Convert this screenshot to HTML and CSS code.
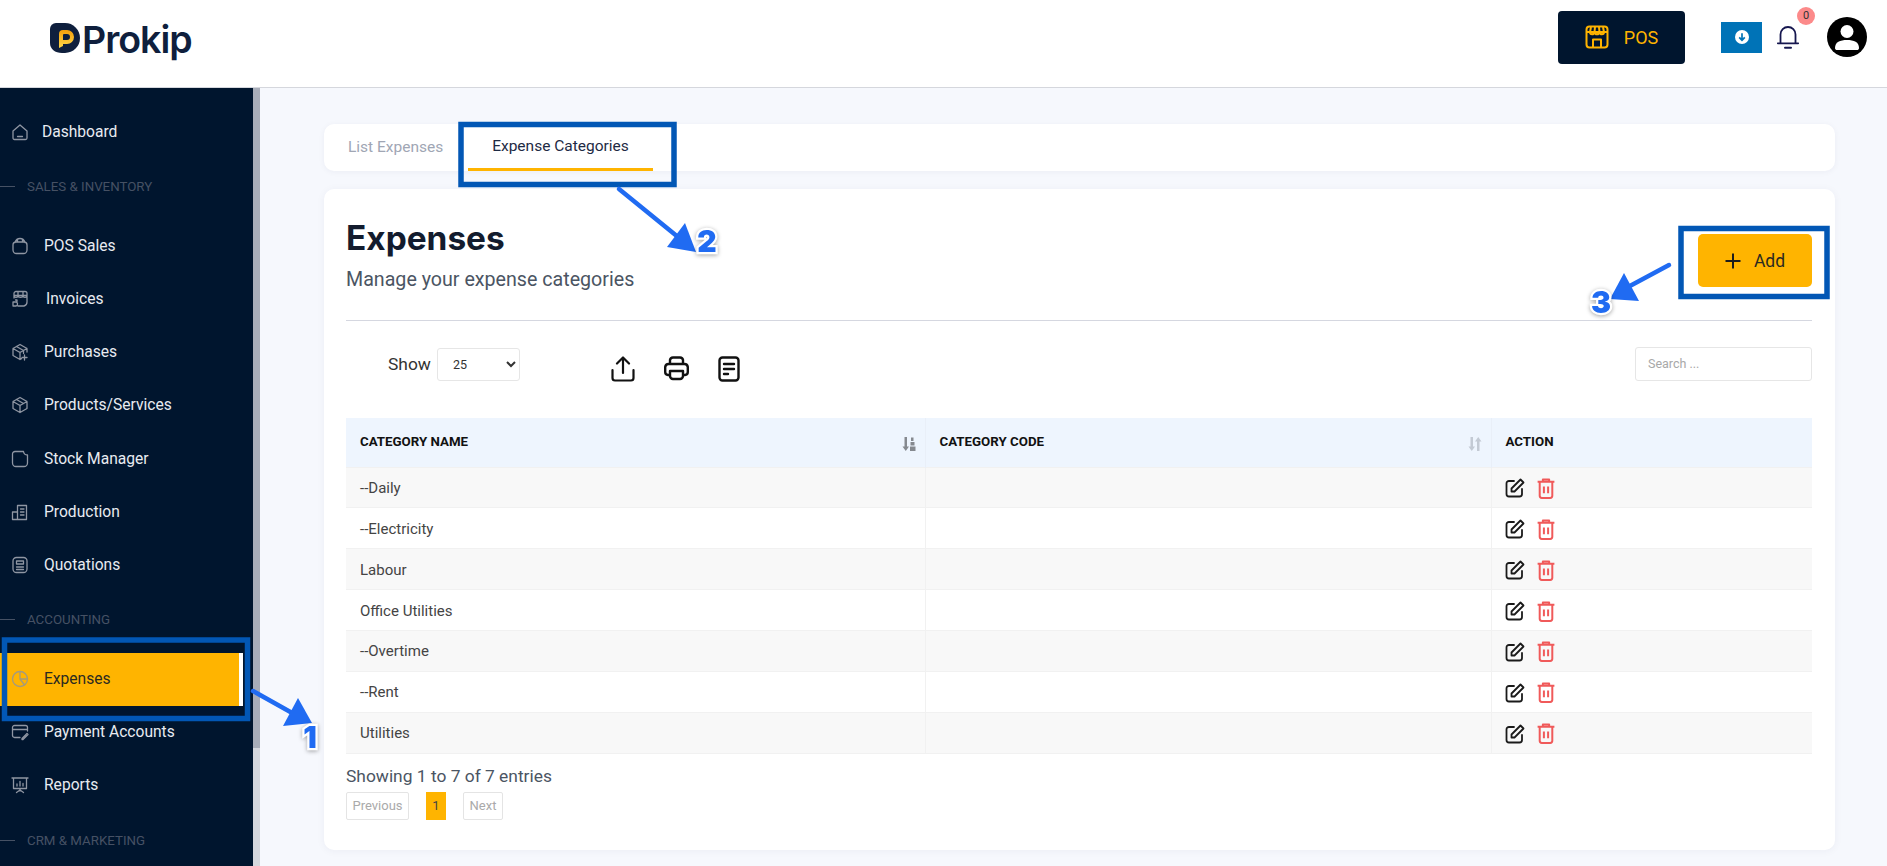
FILE: index.html
```html
<!DOCTYPE html>
<html lang="en">
<head>
<meta charset="utf-8">
<title>Prokip - Expense Categories</title>
<link rel="stylesheet" href="styles.css">
</head>
<body>
<div class="page">
  <header class="topbar">
    <a class="logo">
      <svg class="logo-mark" viewBox="0 0 30 31" width="30" height="31">
        <defs><linearGradient id="pg" x1="0" y1="0" x2="0" y2="1"><stop offset="0" stop-color="#f59f0a"/><stop offset="1" stop-color="#ffd84a"/></linearGradient></defs>
        <path d="M6 0H15A15 15 0 0 1 30 15A15 15 0 0 1 15 30H12C5 30 0 26 0 20V6A6 6 0 0 1 6 0Z" fill="#0f1f3d"/>
        <path d="M9 25V11A4 4 0 0 1 13 7H17A7 7 0 0 1 17 21H13V17H17A3 3 0 0 0 17 11H14A1 1 0 0 0 13 12V23Z" fill="url(#pg)"/>
      </svg>
      <span class="logo-text">Prokip</span>
    </a>
    <div class="top-actions">
      <button class="pos-btn">
        <svg viewBox="0 0 24 24" width="24" height="24" fill="none" stroke="#ffb400" stroke-width="2" stroke-linejoin="round"><rect x="1.500" y="1.500" width="21" height="21" rx="3"/><path d="M2 7H22M6 2L5 7C5 10 9 10 9.500 7L10 2M9.500 7C10 10 14 10 14.500 7L14 2M14.500 7C15 10 19 10 19 7L18 2M8 22V14.500H16V22"/></svg>
        <span>POS</span>
      </button>
      <button class="dl-btn">
        <svg viewBox="0 0 14 14" width="14" height="14"><circle cx="7" cy="7" r="7" fill="#fff"/><path d="M7 3.200V10M4.200 7.400L7 10.200L9.800 7.400" fill="none" stroke="#0073b7" stroke-width="1.700"/></svg>
      </button>
      <div class="bell">
        <svg viewBox="0 0 22 24" width="22" height="24" fill="none" stroke="#16174f" stroke-width="1.800" stroke-linecap="round"><path d="M3.500 18V9.500A7.500 7.500 0 0 1 18.500 9.500V18M0.800 18.300H21.200"/><path d="M8 22.800H14" stroke-width="2"/></svg>
        <span class="badge">0</span>
      </div>
      <svg class="avatar" viewBox="0 0 40 40" width="40" height="40"><circle cx="20" cy="20" r="20" fill="#000"/><circle cx="20" cy="14.500" r="6.500" fill="#fff"/><path d="M8 31C8 25 13 23 20 23S32 25 32 31C32 32.500 31 33 30 33H10C9 33 8 32.500 8 31Z" fill="#fff"/></svg>
    </div>
  </header>

  <div class="body-row">
    <aside class="sidebar">
      <nav class="nav">
        <a class="nav-item nav-tight"><svg class="ico" viewBox="0 0 18 18"><path d="M2 15V8L9 2L16 8V15A1.500 1.500 0 0 1 14.500 16.500H3.500A1.500 1.500 0 0 1 2 15ZM6.500 13.500H11.500"/></svg><span>Dashboard</span></a>
        <div class="nav-section"><i></i><span>SALES &amp; INVENTORY</span></div>
        <a class="nav-item"><svg class="ico" viewBox="0 0 18 18"><path d="M2 8A3 3 0 0 1 5 5H13A3 3 0 0 1 16 8V13A3.500 3.500 0 0 1 12.500 16.500H5.500A3.500 3.500 0 0 1 2 13ZM4 5.500C5 2.500 7 1.500 9 1.500S13 2.500 14 5.500M6.500 5V2.500M11.500 5V2.500"/></svg><span>POS Sales</span></a>
        <a class="nav-item nav-wide"><svg class="ico" viewBox="0 0 18 18"><path d="M3 8V3.500A2 2 0 0 1 5 1.500H14A2 2 0 0 1 16 3.500V12C16 14 15 15.500 13 16H7M3 5.500H16M3 5.500C3 8 7 8 7 5.500C7 8 12 8 12 5.500C12 8 16 8 16 5.500M7 1.500V5.500M12 1.500V5.500M4.500 10H6V11.500M2 12H5C7 12 7 16 5 16H2Z"/></svg><span>Invoices</span></a>
        <a class="nav-item"><svg class="ico" viewBox="0 0 18 18"><path d="M16 9V5.500L9 1.500L2 5.500V12.500L9 16.500L10.500 15.600M2 5.500L9 9.500L16 5.500M9 9.500V16.500M5.500 3.500L12.500 7.500V10.500M13.500 12V17M11 14.500H16"/></svg><span>Purchases</span></a>
        <a class="nav-item"><svg class="ico" viewBox="0 0 18 18"><path d="M16 5.500V12.500L9 16.500L2 12.500V5.500L9 1.500ZM2 5.500L9 9.500L16 5.500M9 9.500V16.500M5.500 3.500L12.500 7.500"/></svg><span>Products/Services</span></a>
        <a class="nav-item"><svg class="ico" viewBox="0 0 18 18"><path d="M4 1.500H12.500A4 4 0 0 0 16.500 5V13A3.500 3.500 0 0 1 13 16.500H5A3.500 3.500 0 0 1 1.500 13V4A2.500 2.500 0 0 1 4 1.500Z"/></svg><span>Stock Manager</span></a>
        <a class="nav-item"><svg class="ico" viewBox="0 0 18 18"><path d="M1.500 16.500V9H6.500V16.500ZM6.500 16.500V2.500H15.500V16.500H1.500M9.500 6H13M9.500 9H13M9.500 12H13"/></svg><span>Production</span></a>
        <a class="nav-item"><svg class="ico" viewBox="0 0 18 18"><rect x="2" y="1.500" width="14" height="15" rx="3.500"/><path d="M5.500 5H12.500V8H5.500ZM5.500 11H12.500M5.500 13.500H12.500"/></svg><span>Quotations</span></a>
        <div class="nav-section"><i></i><span>ACCOUNTING</span></div>
        <a class="nav-item is-active"><svg class="ico" viewBox="0 0 18 18"><circle cx="9" cy="9" r="7.500"/><path d="M9 1.500V9H16.500M9 9L13.500 15"/></svg><span>Expenses</span></a>
        <a class="nav-item"><svg class="ico" viewBox="0 0 18 18"><path d="M9 14.500H3.500A2 2 0 0 1 1.500 12.500V4.500A2 2 0 0 1 3.500 2.500H14.500A2 2 0 0 1 16.500 4.500V8M1.500 6.500H16.500M11 15.500L16 10.500L17 11.500L12 16.500H11Z"/></svg><span>Payment Accounts</span></a>
        <a class="nav-item"><svg class="ico" viewBox="0 0 18 18"><path d="M1 2H17M2.500 2V12.500H15.500V2M9 12.500V15M5.500 16.500L9 14L12.500 16.500M6 10V8M9 10V5.500M12 10V7.500"/></svg><span>Reports</span></a>
        <div class="nav-section"><i></i><span>CRM &amp; MARKETING</span></div>
      </nav>
    </aside>
    <div class="rail"><div class="rail-thumb"></div></div>

    <main class="main">
      <div class="tabs">
        <a class="tab tab-list">List Expenses</a>
        <a class="tab tab-active">Expense Categories</a>
      </div>

      <section class="panel">
        <div class="panel-head">
          <div class="panel-title">
            <h1>Expenses</h1>
            <p>Manage your expense categories</p>
          </div>
          <button class="add-btn">
            <svg viewBox="0 0 16 16" width="16" height="16" fill="none" stroke="#1c1c1c" stroke-width="2"><path d="M8 0.500V15.500M0.500 8H15.500"/></svg>
            <span>Add</span>
          </button>
        </div>

        <div class="toolbar">
          <label class="show">Show
            <select class="show-select"><option>25</option></select>
          </label>
          <div class="tools">
            <svg viewBox="0 0 24 26" width="24" height="26" fill="none" stroke="#111" stroke-width="2.200" stroke-linecap="round" stroke-linejoin="round"><path d="M12 17V2M6 7.500L12 1.500L18 7.500M1.500 14V22A2.500 2.500 0 0 0 4 24.500H20A2.500 2.500 0 0 0 22.500 22V14"/></svg>
            <svg viewBox="0 0 25 25" width="25" height="25" fill="none" stroke="#111" stroke-width="2.400" stroke-linejoin="round"><path d="M6 8V4A3 3 0 0 1 9 1.500H16A3 3 0 0 1 19 4V8M6 19H4A3 3 0 0 1 1.200 16V11A3.500 3.500 0 0 1 4.500 8H20.500A3.500 3.500 0 0 1 23.800 11V16A3 3 0 0 1 21 19H19"/><path d="M6 15H19V20A3 3 0 0 1 16 23H9A3 3 0 0 1 6 20Z"/></svg>
            <svg viewBox="0 0 22 26" width="22" height="26" fill="none" stroke="#111" stroke-width="2.400" stroke-linecap="round"><rect x="1.500" y="1.500" width="19" height="23" rx="3"/><path d="M6 8H16M6 13H16M6 18H10"/></svg>
          </div>
          <input class="search" type="text" placeholder="Search ...">
        </div>

        <table class="grid">
          <colgroup><col class="col-a"><col class="col-b"><col class="col-c"></colgroup>
          <thead>
            <tr>
              <th><div class="th-in"><span>CATEGORY NAME</span>
                <svg viewBox="0 0 14 14" width="14" height="14" fill="#85898f"><path d="M2.500 0H5V9.500H7L3.750 14L0.500 9.500H2.500Z"/><path d="M9 0.500H11.500V4H9ZM8.500 5H12.500V8.500H8.500ZM8 9.500H13.500V14H8Z"/></svg></div></th>
              <th><div class="th-in"><span>CATEGORY CODE</span>
                <svg viewBox="0 0 14 14" width="14" height="14" fill="#c3cad4"><path d="M2.500 0H5V9.500H7L3.750 14L0.500 9.500H2.500Z"/><path d="M9 14H11.500V4.500H13.500L10.250 0L7 4.500H9Z"/></svg></div></th>
              <th><div class="th-in"><span>ACTION</span></div></th>
            </tr>
          </thead>
          <tbody>
            <tr><td>--Daily</td><td></td><td><div class="acts"><svg class="act-edit" viewBox="0 0 20 20"><path d="M9 3H4A2.500 2.500 0 0 0 1.500 5.500V16A2.500 2.500 0 0 0 4 18.500H14.500A2.500 2.500 0 0 0 17 16V11M6.500 13.500V10.500L15.500 1.500L18.500 4.500L9.500 13.500Z"/></svg><svg class="act-del" viewBox="0 0 18 20"><path d="M1 3.500H17M6 3.500V1.500H12V3.500M3 3.500V17A2 2 0 0 0 5 19H13A2 2 0 0 0 15 17V3.500M7 8V14.500M11 8V14.500"/></svg></div></td></tr>
            <tr><td>--Electricity</td><td></td><td><div class="acts"><svg class="act-edit" viewBox="0 0 20 20"><path d="M9 3H4A2.500 2.500 0 0 0 1.500 5.500V16A2.500 2.500 0 0 0 4 18.500H14.500A2.500 2.500 0 0 0 17 16V11M6.500 13.500V10.500L15.500 1.500L18.500 4.500L9.500 13.500Z"/></svg><svg class="act-del" viewBox="0 0 18 20"><path d="M1 3.500H17M6 3.500V1.500H12V3.500M3 3.500V17A2 2 0 0 0 5 19H13A2 2 0 0 0 15 17V3.500M7 8V14.500M11 8V14.500"/></svg></div></td></tr>
            <tr><td>Labour</td><td></td><td><div class="acts"><svg class="act-edit" viewBox="0 0 20 20"><path d="M9 3H4A2.500 2.500 0 0 0 1.500 5.500V16A2.500 2.500 0 0 0 4 18.500H14.500A2.500 2.500 0 0 0 17 16V11M6.500 13.500V10.500L15.500 1.500L18.500 4.500L9.500 13.500Z"/></svg><svg class="act-del" viewBox="0 0 18 20"><path d="M1 3.500H17M6 3.500V1.500H12V3.500M3 3.500V17A2 2 0 0 0 5 19H13A2 2 0 0 0 15 17V3.500M7 8V14.500M11 8V14.500"/></svg></div></td></tr>
            <tr><td>Office Utilities</td><td></td><td><div class="acts"><svg class="act-edit" viewBox="0 0 20 20"><path d="M9 3H4A2.500 2.500 0 0 0 1.500 5.500V16A2.500 2.500 0 0 0 4 18.500H14.500A2.500 2.500 0 0 0 17 16V11M6.500 13.500V10.500L15.500 1.500L18.500 4.500L9.500 13.500Z"/></svg><svg class="act-del" viewBox="0 0 18 20"><path d="M1 3.500H17M6 3.500V1.500H12V3.500M3 3.500V17A2 2 0 0 0 5 19H13A2 2 0 0 0 15 17V3.500M7 8V14.500M11 8V14.500"/></svg></div></td></tr>
            <tr><td>--Overtime</td><td></td><td><div class="acts"><svg class="act-edit" viewBox="0 0 20 20"><path d="M9 3H4A2.500 2.500 0 0 0 1.500 5.500V16A2.500 2.500 0 0 0 4 18.500H14.500A2.500 2.500 0 0 0 17 16V11M6.500 13.500V10.500L15.500 1.500L18.500 4.500L9.500 13.500Z"/></svg><svg class="act-del" viewBox="0 0 18 20"><path d="M1 3.500H17M6 3.500V1.500H12V3.500M3 3.500V17A2 2 0 0 0 5 19H13A2 2 0 0 0 15 17V3.500M7 8V14.500M11 8V14.500"/></svg></div></td></tr>
            <tr><td>--Rent</td><td></td><td><div class="acts"><svg class="act-edit" viewBox="0 0 20 20"><path d="M9 3H4A2.500 2.500 0 0 0 1.500 5.500V16A2.500 2.500 0 0 0 4 18.500H14.500A2.500 2.500 0 0 0 17 16V11M6.500 13.500V10.500L15.500 1.500L18.500 4.500L9.500 13.500Z"/></svg><svg class="act-del" viewBox="0 0 18 20"><path d="M1 3.500H17M6 3.500V1.500H12V3.500M3 3.500V17A2 2 0 0 0 5 19H13A2 2 0 0 0 15 17V3.500M7 8V14.500M11 8V14.500"/></svg></div></td></tr>
            <tr><td>Utilities</td><td></td><td><div class="acts"><svg class="act-edit" viewBox="0 0 20 20"><path d="M9 3H4A2.500 2.500 0 0 0 1.500 5.500V16A2.500 2.500 0 0 0 4 18.500H14.500A2.500 2.500 0 0 0 17 16V11M6.500 13.500V10.500L15.500 1.500L18.500 4.500L9.500 13.500Z"/></svg><svg class="act-del" viewBox="0 0 18 20"><path d="M1 3.500H17M6 3.500V1.500H12V3.500M3 3.500V17A2 2 0 0 0 5 19H13A2 2 0 0 0 15 17V3.500M7 8V14.500M11 8V14.500"/></svg></div></td></tr>
          </tbody>
        </table>

        <p class="info">Showing 1 to 7 of 7 entries</p>
        <div class="pager">
          <a class="pg pg-prev">Previous</a>
          <a class="pg pg-cur">1</a>
          <a class="pg pg-next">Next</a>
        </div>
      </section>
    </main>
  </div>

  <svg class="notes" viewBox="0 0 1887 866" width="1887" height="866">
    <g fill="none" stroke="#0257b5" stroke-width="5.500">
      <rect x="4.500" y="640" width="243" height="78.500"/>
      <rect x="461" y="124.500" width="213" height="60"/>
      <rect x="1681" y="228.500" width="146" height="68"/>
    </g>
    <g fill="none" stroke="#206bf2" stroke-width="4.500" stroke-linecap="round">
      <path d="M253 691L294 714"/>
      <path d="M619 189L678 237"/>
      <path d="M1669 265L1628 287"/>
    </g>
    <g fill="#206bf2">
      <path d="M298 698L312 723L283 726Z"/>
      <path d="M685 223L696 252L667 247Z"/>
      <path d="M1624 273L1610 299L1639 301Z"/>
    </g>
    <g class="note-num">
      <text x="310" y="748">1</text>
      <text x="707" y="252">2</text>
      <text x="1601" y="313">3</text>
    </g>
  </svg>
</div>
</body>
</html>
```
FILE: styles.css
```css
* { box-sizing: border-box; }
html, body { margin: 0; height: 100%; overflow: hidden; }
body { font-family: Roboto, "Liberation Sans", sans-serif; color: #1f2937; background: #f6f8fd; }
.page { position: relative; width: 1887px; height: 866px; display: flex; flex-direction: column; overflow: hidden; }

.topbar { height: 88px; flex: none; background: #fff; border-bottom: 1px solid #d5d7dd; display: flex; align-items: center; padding: 0 20px 13px 50px; }
.logo { display: flex; align-items: center; gap: 2px; margin-top: 6px; }
.logo-mark { flex: none; margin-top: -4px; }
.logo-text { font-family: Inter, sans-serif; font-weight: 600; font-size: 37.500px; letter-spacing: -1.000px; line-height: 40px; color: #0f1f3d; }
.top-actions { margin-left: auto; display: flex; align-items: center; }
.pos-btn { width: 127px; height: 53px; background: #00152e; border: 0; border-radius: 4px; display: flex; align-items: center; justify-content: center; gap: 15px; color: #ffb400; font: 400 18px Roboto, sans-serif; padding: 0; }
.dl-btn { width: 41px; height: 31px; margin-left: 36px; background: #0073b7; border: 0; padding: 0; display: flex; align-items: center; justify-content: center; }
.bell { position: relative; width: 22px; height: 24px; margin-left: 15px; }
.bell svg { display: block; }
.badge { position: absolute; left: 20px; top: -18px; width: 18px; height: 18px; border-radius: 50%; background: #fc8a8a; color: #333; font-size: 11px; line-height: 18px; text-align: center; }
.avatar { margin-left: 28px; display: block; }

.body-row { flex: 1; display: flex; min-height: 0; }
.sidebar { width: 253px; flex: none; background: #00152e; overflow: hidden; }
.nav { padding-top: 17px; display: flex; flex-direction: column; }
.nav-item { height: 53.200px; flex: none; display: flex; align-items: center; gap: 15px; padding-left: 11px; color: #e8ebf1; font-size: 15.600px; font-weight: 400; }
.nav-tight { gap: 13px; }
.nav-wide { gap: 17px; }
.ico { width: 18px; height: 18px; flex: none; fill: none; stroke: #8f96a3; stroke-width: 1.300; stroke-linecap: round; stroke-linejoin: round; }
.nav-item.is-active { width: 243px; background: #ffb400; border-right: 4px solid #fff; color: #2b2a20; }
.nav-item.is-active .ico { stroke: #a39a7f; }
.nav-section { height: 61px; flex: none; display: flex; align-items: center; gap: 12px; padding-bottom: 5px; color: #465164; font-size: 13.300px; }
.nav-section i { width: 15px; height: 1px; background: #465164; display: block; }
.rail { width: 7px; flex: none; background: #d5d7dd; }
.rail-thumb { height: 660px; background: #a8adb9; }

.main { flex: 1; min-width: 0; padding: 36px 52px 0 64px; }
.tabs { height: 47px; background: #fff; border-radius: 10px; display: flex; box-shadow: 0 1px 6px rgba(30, 40, 80, .05); padding-left: 24px; }
.tab { font-size: 15.500px; color: #a0a6b4; line-height: 47px; height: 47px; }
.tab-list { width: 120px; }
.tab-active { width: 185px; text-align: center; color: #1e2a44; border-bottom: 3px solid #ffb400; line-height: 44px; }
.panel { margin-top: 18px; height: 661px; background: #fff; border-radius: 10px; box-shadow: 0 1px 8px rgba(30, 40, 80, .05); padding: 0 23px 0 22px; }
.panel-head { height: 132px; border-bottom: 1px solid #d5d7e0; display: flex; justify-content: space-between; align-items: flex-start; }
.panel-title { padding-top: 29px; }
.panel-title h1 { margin: 0; font: 700 33.400px/40px Inter, sans-serif; color: #131c2e; }
.panel-title p { margin: 8px 0 0; font-size: 19.650px; line-height: 28px; color: #4b5563; }
.add-btn { margin-top: 45px; width: 114px; height: 53px; background: #ffb400; border: 0; border-radius: 5px; display: flex; align-items: center; justify-content: center; gap: 13px; font: 400 17.500px Roboto, sans-serif; color: #2b2a20; }
.toolbar { display: flex; align-items: center; height: 34px; margin-top: 26px; }
.show { margin-left: 42px; display: flex; align-items: center; gap: 6px; font-size: 17.400px; line-height: 32px; color: #333; }
.show-select { width: 83px; height: 33px; margin-top: 1px; background: #fff; border: 1px solid #e6e6e6; border-radius: 3px; padding-left: 11px; font: 400 12.500px Roboto, sans-serif; color: #333; }
.tools { margin-left: 91px; margin-top: 9px; display: flex; align-items: center; gap: 29px; }
.tools svg { display: block; }
.search { margin-left: auto; width: 177px; height: 34px; border: 1px solid #e6e6e6; border-radius: 3px; padding: 0 12px 2px; font: 400 12.500px Roboto, sans-serif; }
.search::placeholder { color: #a8a8a8; }

.grid { width: 1466px; margin-top: 37px; border-collapse: collapse; table-layout: fixed; }
.col-a { width: 579px; }
.col-b { width: 566px; }
.col-c { width: 321px; }
.grid th { height: 49px; background: #eef5fe; text-align: left; padding: 0 9px 1px 14px; font-size: 13.300px; font-weight: 700; color: #111; border-right: 1px solid #e9eff8; }
.grid th:last-child { border-right: 0; }
.th-in { display: flex; align-items: center; justify-content: space-between; }
.th-in svg { margin-top: 4px; }
.grid td { height: 40.860px; padding: 1px 14px 0; font-size: 15px; color: #444; border: 1px solid #f1f1f1; border-left: 0; }
.grid td:last-child { border-right: 0; }
.grid tbody tr:nth-child(odd) td { background: #f8f8f8; }
.acts { display: flex; align-items: center; gap: 11px; margin-left: -1px; margin-top: 1px; }
.act-edit { width: 20px; height: 20px; fill: none; stroke: #1a1a1a; stroke-width: 1.800; stroke-linejoin: round; stroke-linecap: round; }
.act-del { width: 20px; height: 21px; fill: none; stroke: #f05a5a; stroke-width: 1.900; stroke-linejoin: round; }

.info { margin: 11px 0 0; font-size: 17.400px; line-height: 22px; color: #4b5563; }
.pager { display: flex; margin-top: 5px; font-size: 13px; color: #aaa; }
.pg { height: 28px; line-height: 26px; text-align: center; border: 1px solid #e4e4e4; border-radius: 2px; }
.pg-prev { width: 63px; }
.pg-cur { width: 20px; margin-left: 17px; background: #ffb400; border: 0; border-radius: 0; color: #444; line-height: 28px; }
.pg-next { width: 40px; margin-left: 17px; }

.notes { position: absolute; left: 0; top: 0; pointer-events: none; }
.note-num { font: 900 30px Inter, sans-serif; fill: #206bf2; stroke: #fff; stroke-width: 4.500px; paint-order: stroke; text-anchor: middle; filter: drop-shadow(0 1px 2px rgba(0, 0, 0, .35)); }
```
